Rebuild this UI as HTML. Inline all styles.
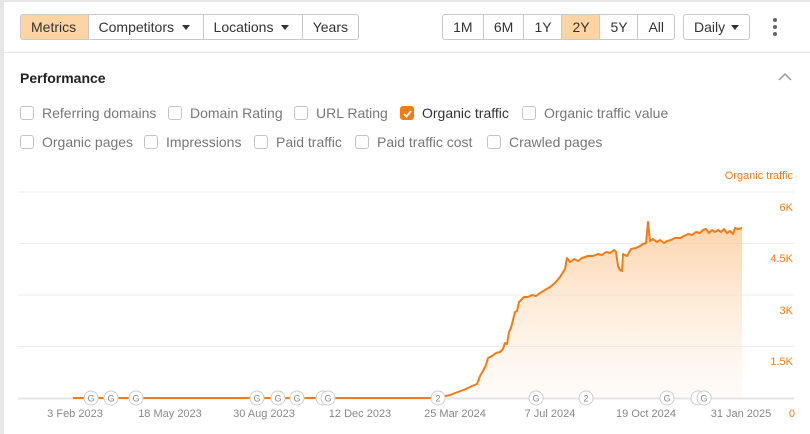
<!DOCTYPE html>
<html><head><meta charset="utf-8"><style>
*{box-sizing:border-box;margin:0;padding:0}
body{width:810px;height:434px;background:#e6e6e6;font-family:"Liberation Sans",Arial,sans-serif;overflow:hidden;position:relative}
.card{position:absolute;left:4px;top:2px;width:806px;height:432px;background:#fff}
.bg{position:absolute;top:14px;height:26px;display:flex;border:1px solid #c9c9c9;border-radius:3px;overflow:hidden}
.bg div{border-right:1px solid #c9c9c9;font-size:14px;color:#333;line-height:24px;padding:0 10px;white-space:nowrap}
.bg div:last-child{border-right:none}
.sel{background:#fdd4a2}
.tri{display:inline-block;width:0;height:0;border-left:4px solid transparent;border-right:4px solid transparent;border-top:5px solid #333;margin-left:8px;vertical-align:2px}
.hr{position:absolute;left:4px;right:0;top:52px;height:1px;background:#e6e6e6}
.title{position:absolute;left:20px;top:70px;font-size:14px;font-weight:bold;color:#222}
.cb{position:absolute;font-size:14px;color:#777;white-space:nowrap;line-height:16px}
.cb i{display:inline-block;width:14px;height:14px;border:1px solid #c4c4c4;border-radius:3px;vertical-align:-2px;margin-right:8px}
.cb.on{color:#333}.cb.on i{background:#f57b15;border-color:#f57b15;position:relative}
</style></head><body>
<div class="card"></div>
<div class="bg" style="left:20px;width:339px"><div class="sel" style="width:68px">Metrics</div><div style="width:116px">Competitors<span class="tri"></span></div><div style="width:100px">Locations<span class="tri"></span></div><div>Years</div></div>
<div class="bg" style="left:442px;width:233px"><div style="width:41px;text-align:center">1M</div><div style="width:41px;text-align:center">6M</div><div style="width:38px;text-align:center">1Y</div><div class="sel" style="width:38px;text-align:center">2Y</div><div style="width:38px;text-align:center">5Y</div><div style="text-align:center;flex:1">All</div></div>
<div class="bg" style="left:683px;width:67px"><div>Daily<span class="tri" style="margin-left:6px"></span></div></div>
<svg style="position:absolute;left:771px;top:17px" width="8" height="20"><circle cx="4" cy="3" r="2" fill="#666"/><circle cx="4" cy="10" r="2" fill="#666"/><circle cx="4" cy="17" r="2" fill="#666"/></svg>
<div class="hr"></div>
<div class="title">Performance</div>
<svg style="position:absolute;left:778px;top:72px" width="14" height="10"><path d="M1 8 L7 2 L13 8" fill="none" stroke="#999" stroke-width="1.5"/></svg>
<div class="cb" style="left:20px;top:105px"><i></i>Referring domains</div>
<div class="cb" style="left:168px;top:105px"><i></i>Domain Rating</div>
<div class="cb" style="left:294px;top:105px"><i></i>URL Rating</div>
<div class="cb on" style="left:400px;top:105px"><i><svg style="position:absolute;left:1px;top:1px" width="11" height="11"><path d="M2 6 L4.5 8.5 L9 3" fill="none" stroke="#fff" stroke-width="1.8"/></svg></i>Organic traffic</div>
<div class="cb" style="left:522px;top:105px"><i></i>Organic traffic value</div>
<div class="cb" style="left:20px;top:134px"><i></i>Organic pages</div>
<div class="cb" style="left:144px;top:134px"><i></i>Impressions</div>
<div class="cb" style="left:254px;top:134px"><i></i>Paid traffic</div>
<div class="cb" style="left:355px;top:134px"><i></i>Paid traffic cost</div>
<div class="cb" style="left:487px;top:134px"><i></i>Crawled pages</div>
<svg style="position:absolute;left:0;top:0" width="810" height="434" font-family="Liberation Sans, Arial, sans-serif">
<defs><linearGradient id="g" x1="0" y1="0" x2="0" y2="1"><stop offset="0" stop-color="#fbc58f" stop-opacity=".75"/><stop offset="1" stop-color="#fde7d2" stop-opacity=".15"/></linearGradient></defs>
<g stroke="#ececec" stroke-width="1"><line x1="18" x2="794" y1="192" y2="192"/><line x1="18" x2="794" y1="243.5" y2="243.5"/><line x1="18" x2="794" y1="295" y2="295"/><line x1="18" x2="794" y1="346.5" y2="346.5"/></g>
<line x1="18" x2="794" y1="398.5" y2="398.5" stroke="#e4e4e4" stroke-width="2"/>
<g fill="#f57b15" font-size="11" text-anchor="end"><text x="793" y="179">Organic traffic</text><text x="793" y="211">6K</text><text x="793" y="262">4.5K</text><text x="793" y="314">3K</text><text x="793" y="365">1.5K</text><text x="795" y="417">0</text></g>
<path id="ln" d="M437 398 L450 395 L458 392 L466 389 L472 386 L477 384 L480 376 L483 371 L486 365 L488 358 L492 356 L496 353 L500 352 L503 349 L505 343 L507 344 L509 332 L511 328 L513 320 L515 312 L517 311 L519 302 L521 300 L524 297 L528 297 L532 295 L536 296 L540 293 L545 290 L550 287 L555 283 L560 277 L565 269 L567 258 L570 262 L574 259 L578 261 L582 258 L588 256 L593 256 L598 254 L602 255 L606 252 L610 253 L614 250 L616 252 L618 266 L620 270 L622 271 L623 254 L627 256 L631 249 L636 248 L640 246 L643 244 L646 243 L648 222 L650 241 L653 239 L657 242 L660 240 L664 243 L667 241 L671 240 L675 238 L680 238 L684 236 L688 234 L692 235 L696 232 L700 233 L703 230 L706 229 L709 233 L712 230 L715 232 L718 230 L721 232 L724 229 L727 233 L730 231 L733 234 L735 228 L738 229 L742 228 L742 398 Z" fill="url(#g)"/>
<path d="M73 398 L437 398 L450 395 L458 392 L466 389 L472 386 L477 384 L480 376 L483 371 L486 365 L488 358 L492 356 L496 353 L500 352 L503 349 L505 343 L507 344 L509 332 L511 328 L513 320 L515 312 L517 311 L519 302 L521 300 L524 297 L528 297 L532 295 L536 296 L540 293 L545 290 L550 287 L555 283 L560 277 L565 269 L567 258 L570 262 L574 259 L578 261 L582 258 L588 256 L593 256 L598 254 L602 255 L606 252 L610 253 L614 250 L616 252 L618 266 L620 270 L622 271 L623 254 L627 256 L631 249 L636 248 L640 246 L643 244 L646 243 L648 222 L650 241 L653 239 L657 242 L660 240 L664 243 L667 241 L671 240 L675 238 L680 238 L684 236 L688 234 L692 235 L696 232 L700 233 L703 230 L706 229 L709 233 L712 230 L715 232 L718 230 L721 232 L724 229 L727 233 L730 231 L733 234 L735 228 L738 229 L742 228" fill="none" stroke="#f57b15" stroke-width="2" stroke-linejoin="round"/>
<g font-size="9" fill="#888" text-anchor="middle">
<g stroke="#ccc" stroke-width="1">
<circle cx="91" cy="398" r="7" fill="#fff"/><circle cx="111" cy="398" r="7" fill="#fff"/><circle cx="136" cy="398" r="7" fill="#fff"/><circle cx="257" cy="398" r="7" fill="#fff"/><circle cx="278" cy="398" r="7" fill="#fff"/><circle cx="297" cy="398" r="7" fill="#fff"/><circle cx="323" cy="398" r="7" fill="#fff"/><circle cx="328" cy="398" r="7" fill="#fff"/><circle cx="438" cy="398" r="7" fill="#fff"/><circle cx="536" cy="398" r="7" fill="#fff"/><circle cx="586" cy="398" r="7" fill="#fff"/><circle cx="667" cy="398" r="7" fill="#fff"/><circle cx="698" cy="398" r="7" fill="#fff"/><circle cx="704" cy="398" r="7" fill="#fff"/></g>
<text x="91" y="401.5">G</text><text x="111" y="401.5">G</text><text x="136" y="401.5">G</text><text x="257" y="401.5">G</text><text x="278" y="401.5">G</text><text x="297" y="401.5">G</text><text x="328" y="401.5">G</text><text x="438" y="401.5">2</text><text x="536" y="401.5">G</text><text x="586" y="401.5">2</text><text x="667" y="401.5">G</text><text x="704" y="401.5">G</text>
</g>
<g font-size="11" fill="#888" text-anchor="middle"><text x="75" y="417">3 Feb 2023</text><text x="170" y="417">18 May 2023</text><text x="264" y="417">30 Aug 2023</text><text x="360" y="417">12 Dec 2023</text><text x="455" y="417">25 Mar 2024</text><text x="550" y="417">7 Jul 2024</text><text x="646" y="417">19 Oct 2024</text><text x="741" y="417">31 Jan 2025</text></g>
</svg>
</body></html>
